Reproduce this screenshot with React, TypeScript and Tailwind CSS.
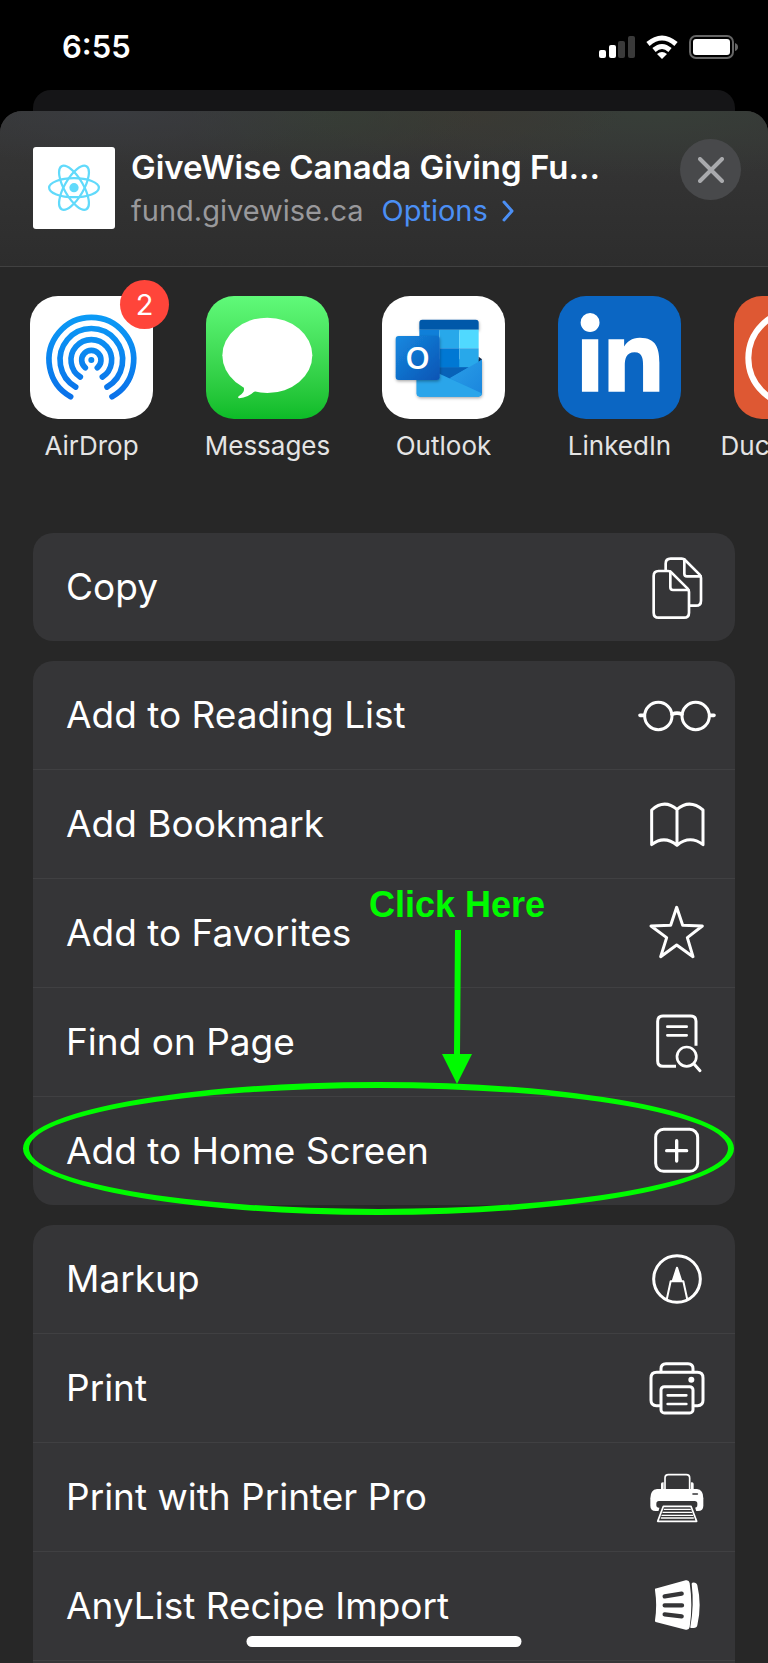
import React from 'react';
import { FaLinkedinIn } from 'react-icons/fa';

const RowIcon = ({ children, width = 9 }: { children: React.ReactNode; width?: number }) => (
  <svg viewBox="0 0 240 240" className="h-20 w-20 shrink-0" fill="none" stroke="#fff" strokeWidth={width} strokeLinecap="round" strokeLinejoin="round" aria-hidden="true">
    {children}
  </svg>
);

const CopyIcon = () => (
  <RowIcon width={8}>
    <path d="M86 70V50q0-15 15-15h33q6 0 10 4l44 44q4 4 4 10v68q0 15-15 15h-18" />
    <path d="M142 37v43q0 8 8 8h41" />
    <path d="M65 72h28q6 0 10 4l49 49q4 4 4 10v62q0 15-15 15H65q-15 0-15-15V87q0-15 15-15Z" />
    <path d="M100 74v47q0 8 8 8h46" />
  </RowIcon>
);

const GlassesIcon = () => (
  <RowIcon>
    <circle cx="64" cy="123" r="41" />
    <circle cx="176" cy="123" r="41" />
    <path d="M105 118q15-7 30 0M9 121h13M218 121h13" strokeWidth="11" />
  </RowIcon>
);

const BookIcon = () => (
  <RowIcon>
    <path d="M44 78Q82 44 120 76Q158 44 198 78V182Q158 152 120 184Q82 152 44 182ZM120 76V184" />
  </RowIcon>
);

const StarIcon = () => (
  <RowIcon>
    <path d="M119 43L137 97L196 99L151 134L168 191L119 156L71 191L89 134L42 99L101 97Z" />
  </RowIcon>
);

const FindIcon = () => (
  <RowIcon>
    <path d="M177 131V58q0-16-16-16H78q-16 0-16 16v119q0 16 16 16h39" strokeLinecap="butt" />
    <path d="M91 74h58M91 100h58" strokeWidth="8" />
    <circle cx="149" cy="164" r="29" strokeWidth="8" />
    <path d="M171 186l18 20" />
  </RowIcon>
);

const PlusSquareIcon = () => (
  <RowIcon>
    <rect x="56" y="55" width="126" height="126" rx="24" />
    <path d="M119 89v61M89 119h60" strokeWidth="10" />
  </RowIcon>
);

const MarkupIcon = () => (
  <RowIcon>
    <circle cx="120" cy="120" r="70" />
    <path d="M120 86l-13 40h26Z" fill="#fff" strokeWidth="6" />
    <path d="M89 182l12-55h38l12 55" strokeWidth="6" />
  </RowIcon>
);

const PrintIcon = () => (
  <RowIcon>
    <path d="M72 71v-9q0-15 15-15h66q15 0 15 15v9" />
    <path d="M70 173H58q-16 0-16-16V90q0-17 17-17h122q17 0 17 17v67q0 16-16 16h-12" />
    <rect x="72" y="116" width="96" height="79" rx="10" />
    <path d="M92 142h56M92 168h56" strokeWidth="8" />
    <circle cx="163" cy="95" r="9" fill="#fff" stroke="none" />
  </RowIcon>
);

const PrinterProIcon = () => (
  <RowIcon width={5}>
    <path d="M84 96V63q0-10 10-10h54q10 0 10 10v33" />
    <path d="M72 98V80q0-4 8-4v22ZM170 98V80q0-4-8-4v22Z" fill="#fff" stroke="none" />
    <path d="M60 96H180q19 2 19 28v22q0 16-16 16H56q-16 0-16-16v-22q0-26 20-28Z" fill="#fff" stroke="none" />
    <rect x="58" y="132" width="123" height="20" rx="8" fill="#353537" stroke="none" />
    <path d="M74 142h94l16 55H58Z" fill="#353537" stroke="#353537" strokeWidth="7" />
    <path d="M79 148h83l17 45H62Z" />
    <path d="M82 157h78M78 166h86M75 175h92M73 183h96" strokeWidth="4" />
    <path d="M168 111h13" stroke="#353537" strokeWidth="5" />
  </RowIcon>
);

const SpatulaIcon = () => (
  <RowIcon>
    <path d="M54 68L146 43q10-2 12 8q10 67 0 132q-2 10-12 8L56 168q-3-1-2-5q7-45 0-90Z" fill="#fff" stroke="none" />
    <path d="M166 50q12-2 15 8q14 60 0 120q-2 9-13 8h-6q-3 0-2-4q12-64 4-128q0-3 2-4Z" fill="#fff" stroke="none" />
    <path d="M83 91l51-8M83 118h52M83 145l51 6" stroke="#353537" strokeWidth="13" />
  </RowIcon>
);

const AirDropIcon = () => (
  <svg viewBox="0 0 369 369" className="h-full w-full bg-white" fill="none" strokeWidth="17" strokeLinecap="round" aria-hidden="true">
    <defs>
      <linearGradient id="airdrop" gradientUnits="userSpaceOnUse" x1="0" y1="56" x2="0" y2="312">
        <stop offset="0" stopColor="#0c9bf6" />
        <stop offset="1" stopColor="#0a70e9" />
      </linearGradient>
    </defs>
    <g stroke="url(#airdrop)">
      <path d="M122 302A127 127 0 1 1 246 302" />
      <path d="M137 273A94 94 0 1 1 231 273" />
      <path d="M151 243A61 61 0 1 1 217 243" />
      <path d="M166 215A29 29 0 1 1 202 215" />
    </g>
    <circle cx="184" cy="192" r="9" fill="#0a87f0" />
  </svg>
);

const MessagesIcon = () => (
  <svg viewBox="0 0 369 369" className="h-full w-full bg-linear-to-b from-[#60fa79] to-[#0bbb27]" fill="#fff" aria-hidden="true">
    <ellipse cx="184" cy="178" rx="135" ry="113" />
    <path d="M108 266Q118 276 112 288Q107 296 98 301Q94 306 100 307Q126 305 146 286L170 270Z" />
  </svg>
);

const OutlookIcon = () => (
  <svg viewBox="0 0 369 369" className="h-full w-full bg-white" aria-hidden="true">
    <defs>
      <linearGradient id="outlook" x1="0" y1="0" x2="1" y2="1">
        <stop offset="0" stopColor="#1589e0" />
        <stop offset="1" stopColor="#0a54b4" />
      </linearGradient>
      <linearGradient id="flap" x1="0" y1="0" x2="1" y2="1">
        <stop offset="0" stopColor="#2a9fe8" />
        <stop offset="1" stopColor="#1b86dd" />
      </linearGradient>
      <filter id="soft" x="-20%" y="-20%" width="150%" height="150%">
        <feDropShadow dx="1" dy="4" stdDeviation="4" floodColor="#000" floodOpacity="0.35" />
      </filter>
    </defs>
    <g filter="url(#soft)">
      <path d="M112 101V80q0-9 9-9h160q9 0 9 9v21Z" fill="#0559a9" />
      <path d="M104 190h196v102q0 10-10 10H114q-10 0-10-10Z" fill="#1f92e2" />
    </g>
    <path d="M112 101h60v56h-60Z" fill="#0f7fd9" />
    <path d="M172 101h60v56h-60Z" fill="#28a8ea" />
    <path d="M232 101h58v56h-58Z" fill="#50d9ff" />
    <path d="M112 157h60v57h-60Z" fill="#0669c4" />
    <path d="M172 157h60v57h-60Z" fill="#0078d4" />
    <path d="M232 157h58v57h-58Z" fill="#28a8ea" />
    <path d="M112 214h148l-58 34Z" fill="#0862b8" />
    <path d="M290 182l10 8-10 8Z" fill="#12284a" />
    <path d="M204 246L300 191v102Z" fill="url(#flap)" />
    <path d="M104 202L299 292q-1 10-11 10H114q-10 0-10-10Z" fill="#2aa5ea" />
    <rect x="41" y="120" width="132" height="132" rx="9" fill="url(#outlook)" filter="url(#soft)" />
    <text x="107" y="220" textAnchor="middle" fill="#fff" fontFamily="Open Sans, sans-serif" fontWeight="600" fontSize="94">O</text>
  </svg>
);

const LinkedInIcon = () => (
  <span className="flex h-full w-full items-center justify-center bg-[#0b66c3] text-white">
    <FaLinkedinIn className="h-[90px] w-[90px]" />
  </span>
);

const DuckIcon = () => (
  <svg viewBox="0 0 369 369" className="h-full w-full bg-[#de5833]" fill="none" stroke="#fff" strokeWidth="18" aria-hidden="true">
    <circle cx="184" cy="186" r="141" />
  </svg>
);

const apps = [
  { name: 'AirDrop', icon: <AirDropIcon />, badge: 2 },
  { name: 'Messages', icon: <MessagesIcon /> },
  { name: 'Outlook', icon: <OutlookIcon /> },
  { name: 'LinkedIn', icon: <LinkedInIcon /> },
  { name: 'DuckDuckGo', icon: <DuckIcon /> },
];

const bookmarkActions = [
  { label: 'Add to Reading List', icon: <GlassesIcon /> },
  { label: 'Add Bookmark', icon: <BookIcon /> },
  { label: 'Add to Favorites', icon: <StarIcon /> },
  { label: 'Find on Page', icon: <FindIcon /> },
  { label: 'Add to Home Screen', icon: <PlusSquareIcon />, highlight: true },
];

const otherActions = [
  { label: 'Markup', icon: <MarkupIcon /> },
  { label: 'Print', icon: <PrintIcon /> },
  { label: 'Print with Printer Pro', icon: <PrinterProIcon /> },
  { label: 'AnyList Recipe Import', icon: <SpatulaIcon /> },
];

function ActionRow({ label, icon, highlight }: { label: string; icon: React.ReactNode; highlight?: boolean }) {
  return (
    <li className="relative">
      <button type="button" className="flex h-27 w-full items-center justify-between pr-[18px] pl-[33px] text-left text-[37px]">
        <span>{label}</span>
        {icon}
      </button>
      {highlight && (
        <>
          <div className="pointer-events-none absolute -top-[15px] -bottom-[10px] -left-[10px] right-px rounded-[50%] border-[6px] border-[#00fb00]" />
          <div className="pointer-events-none absolute bottom-[121px] left-[336px] flex flex-col items-center gap-1 text-[#00fb00]">
            <span className="font-['Liberation_Sans',sans-serif] text-[36px] leading-[42px] font-bold">Click Here</span>
            <svg viewBox="0 0 30 154" className="h-[154px] w-[30px]" fill="currentColor" aria-hidden="true">
              <path d="M13 0h6l-1 124h12L15 154 0 124h12Z" />
            </svg>
          </div>
        </>
      )}
    </li>
  );
}

function StatusBar() {
  return (
    <div className="flex h-[90px] items-center justify-between pr-[29px] pl-[62px]">
      <span className="mt-1 text-[31px] font-semibold">6:55</span>
      <div className="mt-1 flex items-center gap-[11px]">
        <svg viewBox="0 0 36 24" className="h-6 w-9" fill="#fff" aria-hidden="true">
          <rect x="0" y="15" width="7" height="8" rx="2" />
          <rect x="10" y="10" width="7" height="13" rx="2" />
          <rect x="19" y="6" width="7" height="17" rx="2" fill="#3a3a3a" />
          <rect x="29" y="1" width="7" height="22" rx="2" fill="#3a3a3a" />
        </svg>
        <svg viewBox="0 0 32 24" className="h-6 w-8" fill="none" stroke="#fff" strokeWidth="5" aria-hidden="true">
          <path d="M2 9Q16-3 30 9" />
          <path d="M8 15Q16 8 24 15" />
          <path d="M11 19Q16 15 21 19L16 24Z" fill="#fff" stroke="none" />
        </svg>
        <svg viewBox="0 0 50 24" className="h-6 w-[50px]" aria-hidden="true">
          <rect x="1" y="1" width="43" height="22" rx="6" fill="none" stroke="#666" strokeWidth="2" />
          <rect x="4" y="4" width="37" height="16" rx="3" fill="#fff" />
          <path d="M46 8q3 1 3 4t-3 4Z" fill="#666" />
        </svg>
      </div>
    </div>
  );
}

export default function App() {
  return (
    <div className="relative flex h-screen flex-col overflow-hidden bg-black font-[Inter,sans-serif] text-white">
      <StatusBar />
      <div className="mx-[33px] h-[21px] shrink-0 rounded-t-[18px] bg-[#151517]" />

      <main className="flex-1 overflow-hidden rounded-t-[22px] bg-[#272727]">
        <header className="flex h-[156px] items-start border-b border-[#414141] bg-[radial-gradient(ellipse_at_15%_0%,#393b3f_0%,transparent_25%),radial-gradient(ellipse_at_42%_0%,#363d35_0%,transparent_25%),radial-gradient(ellipse_at_60%_0%,#3a3933_0%,transparent_25%),radial-gradient(ellipse_at_85%_0%,#373e38_0%,transparent_30%),linear-gradient(#373737,#2d2d2d)] pt-7 pr-[27px] pl-[33px]">
          <div className="mt-2 flex h-[82px] w-[82px] shrink-0 items-center justify-center rounded-[3px] bg-white">
            <svg viewBox="-11.5 -10.5 23 21" className="w-[52px]" fill="none" stroke="#61dafb" aria-hidden="true">
              <circle r="2.050" fill="#61dafb" stroke="none" />
              <ellipse rx="11" ry="4.200" />
              <ellipse rx="11" ry="4.200" transform="rotate(60)" />
              <ellipse rx="11" ry="4.200" transform="rotate(120)" />
            </svg>
          </div>
          <div className="mt-2 ml-4 flex-1">
            <h1 className="text-[33px] leading-10 font-semibold whitespace-nowrap">GiveWise Canada Giving Fu...</h1>
            <p className="flex items-center gap-[18px] text-[29px] leading-[48px] text-[#99999c]">
              <span>fund.givewise.ca</span>
              <a href="#options" className="flex items-center gap-[14px] text-[#4b8ff5]">
                Options
                <svg viewBox="0 0 12 22" className="h-[22px] w-3" fill="none" stroke="currentColor" strokeWidth="3" strokeLinecap="round" strokeLinejoin="round" aria-hidden="true">
                  <path d="M2 2l8 9-8 9" />
                </svg>
              </a>
            </p>
          </div>
          <button type="button" aria-label="Close" className="flex h-[61px] w-[61px] shrink-0 items-center justify-center rounded-full bg-[#48494b]">
            <svg viewBox="0 0 26 26" className="h-[26px] w-[26px]" stroke="#a9aaad" strokeWidth="4" strokeLinecap="round" aria-hidden="true">
              <path d="M2 2l22 22M24 2L2 24" />
            </svg>
          </button>
        </header>

        <ul className="flex gap-[53px] overflow-hidden pt-[29px] pb-[70px] pl-[30px]">
          {apps.map(app => (
            <li key={app.name} className="relative w-[123px] shrink-0">
              <button type="button" className="flex w-full flex-col items-center gap-[9px]">
                <span className="h-[123px] w-[123px] overflow-hidden rounded-[28px]">{app.icon}</span>
                <span className="max-w-[150px] truncate text-[26px] leading-[35px] text-[#e4e4e4]">{app.name}</span>
              </button>
              {app.badge && (
                <span className="absolute -top-4 -right-4 flex h-[49px] w-[49px] items-center justify-center rounded-full bg-[#ff453a] text-[29px]">
                  {app.badge}
                </span>
              )}
            </li>
          ))}
        </ul>

        <div className="flex flex-col gap-5 px-[33px]">
          <ul className="rounded-[20px] bg-[#353537]">
            <ActionRow label="Copy" icon={<CopyIcon />} />
          </ul>
          <ul className="divide-y divide-[#404042] rounded-[20px] bg-[#353537]">
            {bookmarkActions.map(action => (
              <ActionRow key={action.label} {...action} />
            ))}
          </ul>
          <div className="rounded-t-[20px] bg-[#353537] pb-27">
            <ul className="divide-y divide-[#404042] border-b border-[#404042]">
              {otherActions.map(action => (
                <ActionRow key={action.label} {...action} />
              ))}
            </ul>
          </div>
        </div>
      </main>

      <div className="absolute bottom-4 left-1/2 h-[11px] w-[275px] -translate-x-1/2 rounded-full bg-white" />
    </div>
  );
}
